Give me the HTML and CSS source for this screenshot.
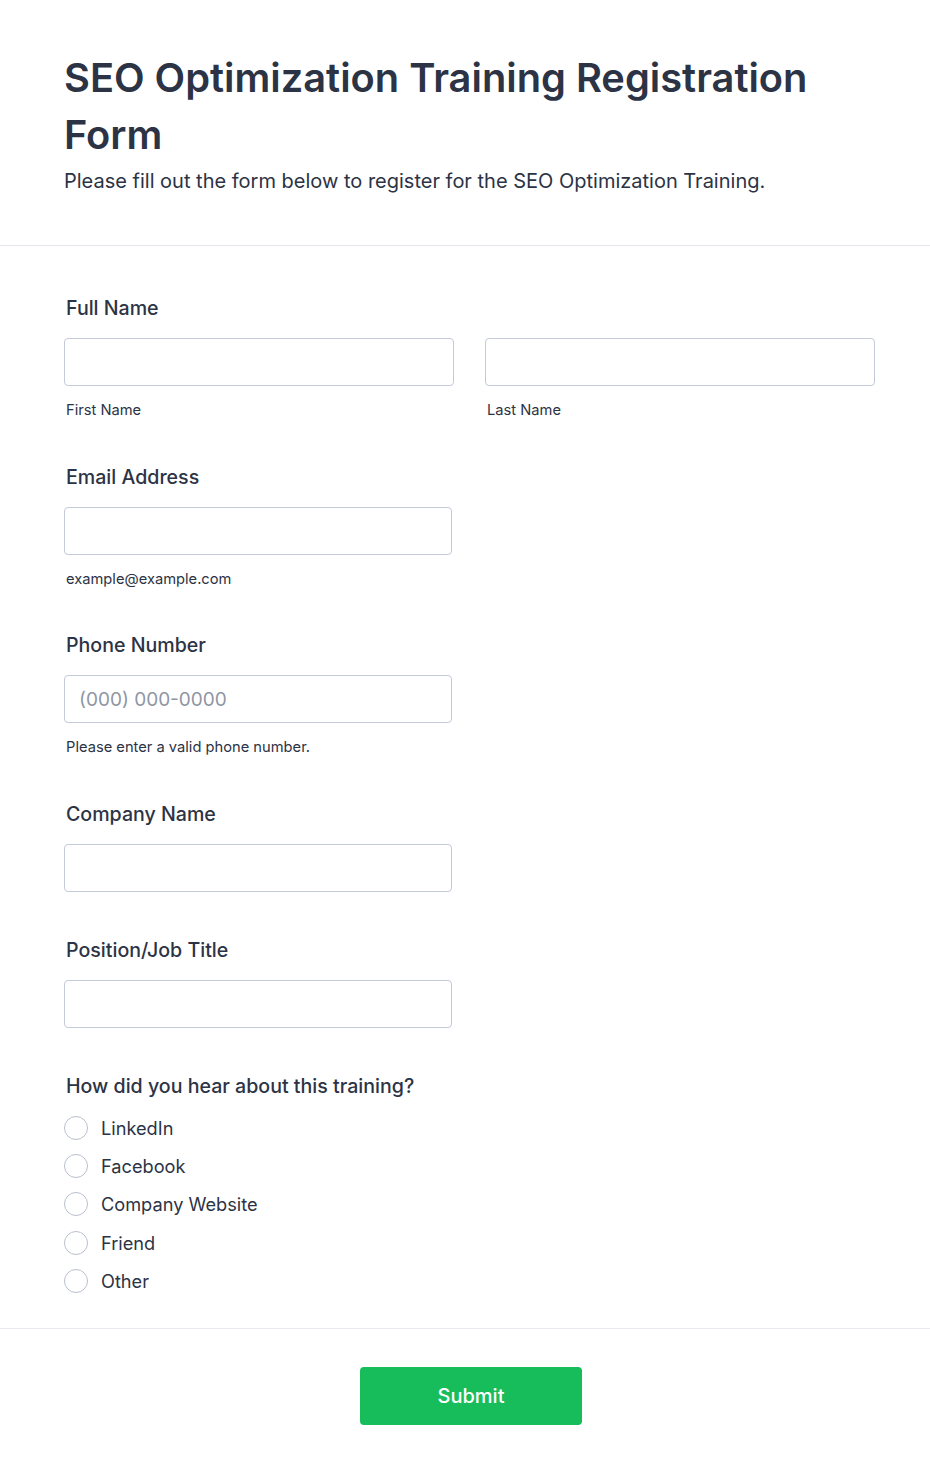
FILE: index.html
```html
<!DOCTYPE html>
<html lang="en">
<head>
<meta charset="utf-8">
<title>SEO Optimization Training Registration Form</title>
<link rel="stylesheet" href="styles.css">
</head>
<body>
<div class="page">
  <header class="header">
    <h1 class="title">SEO Optimization Training Registration Form</h1>
    <p class="subtitle">Please fill out the form below to register for the SEO Optimization Training.</p>
  </header>
  <form class="form">
    <div class="field">
      <label class="label">Full Name</label>
      <div class="row">
        <div class="col">
          <input class="input" type="text">
          <span class="sublabel">First Name</span>
        </div>
        <div class="col">
          <input class="input" type="text">
          <span class="sublabel">Last Name</span>
        </div>
      </div>
    </div>
    <div class="field">
      <label class="label">Email Address</label>
      <div class="col half">
        <input class="input" type="email">
        <span class="sublabel">example@example.com</span>
      </div>
    </div>
    <div class="field">
      <label class="label">Phone Number</label>
      <div class="col half">
        <input class="input" type="tel" placeholder="(000) 000-0000">
        <span class="sublabel">Please enter a valid phone number.</span>
      </div>
    </div>
    <div class="field">
      <label class="label">Company Name</label>
      <div class="col half">
        <input class="input" type="text">
      </div>
    </div>
    <div class="field">
      <label class="label">Position/Job Title</label>
      <div class="col half">
        <input class="input" type="text">
      </div>
    </div>
    <div class="field">
      <label class="label">How did you hear about this training?</label>
      <div class="radios">
        <label class="radio"><span class="circle"></span>LinkedIn</label>
        <label class="radio"><span class="circle"></span>Facebook</label>
        <label class="radio"><span class="circle"></span>Company Website</label>
        <label class="radio"><span class="circle"></span>Friend</label>
        <label class="radio"><span class="circle"></span>Other</label>
      </div>
    </div>
  </form>
  <div class="footer">
    <button class="submit" type="button">Submit</button>
  </div>
</div>
</body>
</html>
```
FILE: styles.css
```css
* { box-sizing: border-box; }
html, body { margin: 0; padding: 0; background: #ffffff; }
body {
  font-family: Inter, "Noto Sans", "Liberation Sans", sans-serif;
  color: #2c3345;
}
.page { width: 930px; }
.header {
  padding: 49px 64px 50px;
  border-bottom: 1px solid #e3e6ee;
}
.title {
  margin: 0;
  font-size: 39.8px;
  line-height: 57px;
  font-weight: 600;
}
.subtitle {
  margin: 4px 0 0;
  font-size: 20px;
  line-height: 28px;
  font-weight: 400;
}
.form {
  padding: 49px 55px 35px 64px;
  display: flex;
  flex-direction: column;
  gap: 45px;
}
.field { display: flex; flex-direction: column; }
.label {
  font-size: 19.6px;
  line-height: 26px;
  font-weight: 500;
  padding-left: 2px;
  margin-bottom: 17px;
}
.row { display: flex; gap: 31px; }
.col { display: flex; flex-direction: column; flex: 0 0 390px; }
.col.half { width: 388px; flex: none; }
.input {
  height: 48px;
  width: 100%;
  border: 1px solid #c3cad8;
  border-radius: 4px;
  padding: 0 14px;
  font-family: Inter, "Noto Sans", sans-serif;
  font-size: 19px;
  color: #2c3345;
  background: #fff;
  outline: none;
}
.input::placeholder { color: #8f96a3; }
.sublabel {
  margin-top: 16px;
  margin-bottom: -0.5px;
  font-size: 14.7px;
  line-height: 17px;
  padding-left: 2px;
}
.radios { display: flex; flex-direction: column; gap: 14.4px; }
.radio {
  display: flex;
  align-items: center;
  gap: 13px;
  height: 24px;
  font-size: 18.2px;
}
.circle {
  width: 24px;
  height: 24px;
  border: 1.5px solid #b9bfcc;
  border-radius: 50%;
  flex: none;
}
.footer {
  border-top: 1px solid #e8eaef;
  padding: 38px 55px 50px 67px;
  display: flex;
  justify-content: center;
}
.submit {
  width: 222px;
  height: 58px;
  border: none;
  border-radius: 4px;
  background: #18bd5b;
  color: #ffffff;
  font-family: Inter, "Noto Sans", sans-serif;
  font-size: 20px;
  font-weight: 500;
}
```
